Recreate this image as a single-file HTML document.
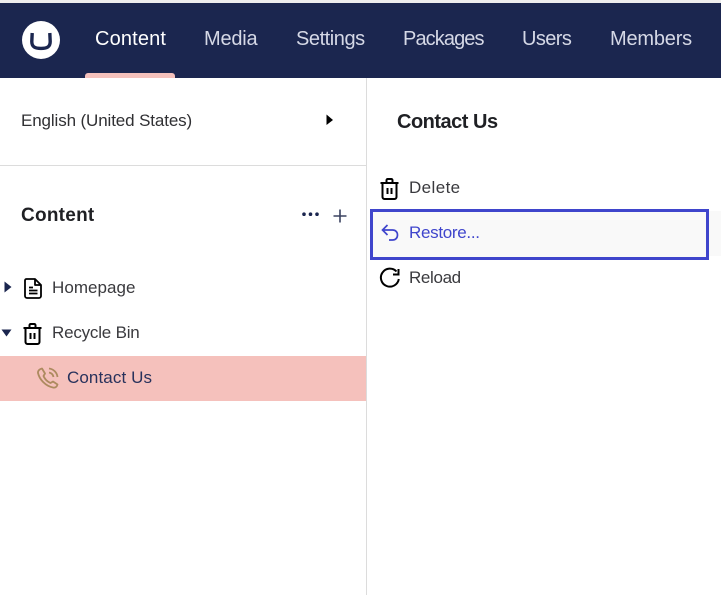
<!DOCTYPE html>
<html>
<head>
<meta charset="utf-8">
<style>
html,body{margin:0;padding:0;width:721px;height:595px;overflow:hidden;background:#fff}
body{position:relative;font-family:"Liberation Sans",sans-serif;color:#303033}
.a{position:absolute}
.t{position:absolute;white-space:nowrap;font-size:17px;line-height:20px}
.n{position:absolute;white-space:nowrap;font-size:20px;line-height:24px;top:27px;color:#d5d8e6}
svg{position:absolute;overflow:visible}
</style>
</head>
<body>
<div class="a" style="left:0;top:0;width:721px;height:3px;background:#eee"></div>
<div class="a" style="left:0;top:3px;width:721px;height:75px;background:#1b264f"></div>
<div class="a" style="left:85px;top:73px;width:90px;height:5px;background:#f5c1bc;border-radius:3px 3px 0 0"></div>
<svg style="left:22px;top:21px" width="38" height="38" viewBox="0 0 38 38"><circle cx="19" cy="19" r="19" fill="#fff"/><path d="M10.2 12 L9.8 20.5 C9.8 26 13 27.4 19 27.4 C25 27.4 28.2 26 28.2 20.5 L27.8 12" fill="none" stroke="#1b264f" stroke-width="3.4"/></svg>
<div class="n" style="left:95px;color:#fff;letter-spacing:.15px">Content</div>
<div class="n" style="left:204px;letter-spacing:-.2px">Media</div>
<div class="n" style="left:296px;letter-spacing:-.45px">Settings</div>
<div class="n" style="left:403px;letter-spacing:-.9px">Packages</div>
<div class="n" style="left:522px;letter-spacing:-.6px">Users</div>
<div class="n" style="left:610px;letter-spacing:-.2px">Members</div>

<div class="a" style="left:366px;top:78px;width:1px;height:517px;background:#dcdcdc"></div>
<div class="a" style="left:0;top:165px;width:366px;height:1px;background:#dcdcdc"></div>

<div class="t" style="left:21px;top:111px;letter-spacing:-.12px">English (United States)</div>
<svg style="left:326px;top:114px" width="8" height="12"><path d="M0.5 0.5 L7 6 L0.5 11 Z" fill="#000"/></svg>

<div class="t" style="left:21px;top:206px;font-size:19px;font-weight:bold;letter-spacing:.25px;color:#1f2024">Content</div>
<svg style="left:301px;top:209px" width="20" height="12"><circle cx="3" cy="5.2" r="1.8" fill="#1b264f"/><circle cx="9.5" cy="5.2" r="1.8" fill="#1b264f"/><circle cx="16" cy="5.2" r="1.8" fill="#1b264f"/></svg>
<svg style="left:333px;top:209px" width="14" height="14"><path d="M7 0.5V13.5M0.5 7H13.5" stroke="#3a4260" stroke-width="1.6" fill="none"/></svg>

<svg style="left:4px;top:281px" width="8" height="12"><path d="M0.5 0.5 L7.5 6 L0.5 11.5 Z" fill="#1b264f"/></svg>
<svg style="left:24px;top:278px" width="18" height="21" viewBox="0 0 18 21"><path d="M2.5 1H11L17 7V18A2 2 0 0 1 15 20H3A2 2 0 0 1 1 18V2.5A1.5 1.5 0 0 1 2.5 1ZM11 1V7H17M5 9.5H9M5 12.5H13.5M5 15.5H13.5" fill="none" stroke="#000" stroke-width="1.8" stroke-linejoin="round"/></svg>
<div class="t" style="left:52px;top:278px;letter-spacing:.05px;color:#3a3a3e">Homepage</div>

<svg style="left:1px;top:329px" width="11" height="8"><path d="M0.5 0.5 H10.5 L5.5 7.5 Z" fill="#1b264f"/></svg>
<svg style="left:23px;top:323px" width="19" height="22" viewBox="0 0 19 22"><path d="M0.5 5H18.5M6.5 5V2.2A1.2 1.2 0 0 1 7.7 1H11.3A1.2 1.2 0 0 1 12.5 2.2V5M2.5 5V19A2 2 0 0 0 4.5 21H14.5A2 2 0 0 0 16.5 19V5M7.5 10V16M11.5 10V16" fill="none" stroke="#000" stroke-width="2"/></svg>
<div class="t" style="left:52px;top:323px;letter-spacing:-.2px;color:#3a3a3e">Recycle Bin</div>

<div class="a" style="left:0;top:356px;width:366px;height:45px;background:#f5c1bc"></div>
<svg style="left:37px;top:367px" width="22" height="22" viewBox="0 0 22 22"><path d="M5 1.5 L8 6.5 L6.5 9 C8 12.5 10 14.5 13.5 16 L16 14.5 L20.5 17.5 C20 20 18 21 16 20.5 C8.5 19 2.5 12.5 1 6 C.7 3.8 2.5 2 5 1.5ZM12 1.5C16.5 2 20 5.5 20.5 10M12 5.5C14.5 6 16 7.5 16.5 10" fill="none" stroke="#ad8a5f" stroke-width="1.8" stroke-linejoin="round"/></svg>
<div class="t" style="left:67px;top:368px;letter-spacing:.1px;color:#28325c">Contact Us</div>

<div class="t" style="left:397px;top:111px;font-size:20px;line-height:22px;font-weight:bold;letter-spacing:-.5px;color:#1f2024">Contact Us</div>

<svg style="left:380px;top:177.5px" width="19" height="22" viewBox="0 0 19 22"><path d="M0.5 5H18.5M6.5 5V2.2A1.2 1.2 0 0 1 7.7 1H11.3A1.2 1.2 0 0 1 12.5 2.2V5M2.5 5V19A2 2 0 0 0 4.5 21H14.5A2 2 0 0 0 16.5 19V5M7.5 10V16M11.5 10V16" fill="none" stroke="#000" stroke-width="2"/></svg>
<div class="t" style="left:409px;top:178px;letter-spacing:.4px;color:#3a3a3e">Delete</div>

<div class="a" style="left:370px;top:209px;width:339px;height:51px;box-sizing:border-box;border:3px solid #3f45cc;background:#f9f9f9"></div>
<div class="a" style="left:709px;top:211px;width:12px;height:45px;background:#f9f9f9"></div>
<svg style="left:381px;top:224px" width="18" height="18" viewBox="0 0 18 18"><path d="M6.5 1 L1.5 6 L6.5 11 M1.5 6 H11.5 C14.5 6 16.5 8 16.5 11 C16.5 14 14.5 16 11.5 16 H8" fill="none" stroke="#3f45cc" stroke-width="1.7"/></svg>
<div class="t" style="left:409px;top:223px;letter-spacing:-.3px;color:#3f45cc">Restore...</div>

<svg style="left:380px;top:268px" width="20" height="20" viewBox="0 0 20 20"><path d="M16.5 3.5 A9 9 0 1 0 18.8 11" fill="none" stroke="#000" stroke-width="2"/><path d="M18.5 1 V6.5 H13" fill="none" stroke="#000" stroke-width="2"/></svg>
<div class="t" style="left:409px;top:268px;letter-spacing:-.35px;color:#3a3a3e">Reload</div>
</body>
</html>
